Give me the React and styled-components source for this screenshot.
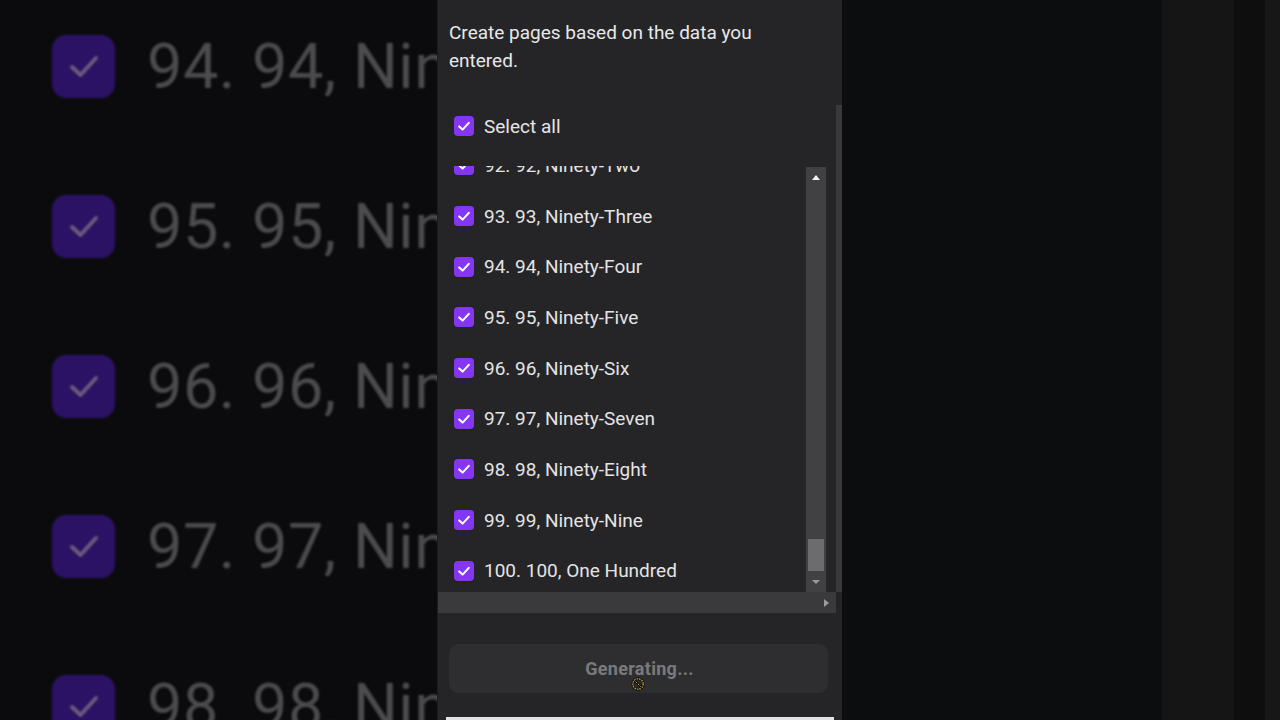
import React from "react";
import styled, { createGlobalStyle } from "styled-components";

const Global = createGlobalStyle`
  html, body { margin: 0; padding: 0; background: #0b0b0d; overflow: hidden; }
  * { box-sizing: border-box; }
`;

const Page = styled.div`
  display: grid;
  grid-template-columns: 438px 404px 438px;
  width: 1280px;
  height: 720px;
  font-family: Roboto, "Liberation Sans", sans-serif;
`;

/* ---------- blurred backdrop (left) ---------- */
const Backdrop = styled.div`
  background: #0b0b0d;
  overflow: hidden;
  padding-left: 52px;
  border-right: 1px solid #1c1c1e;
`;

const BackdropList = styled.div`
  margin-top: -14px;
  filter: blur(1.2px);
`;

const BackdropRow = styled.div`
  height: 160px;
  display: flex;
  align-items: center;
  gap: 32px;
  white-space: nowrap;
`;

const BigBox = styled.div`
  flex: none;
  width: 63px;
  height: 63px;
  border-radius: 14px;
  background: #2b1264;
  display: flex;
  align-items: center;
  justify-content: center;
`;

const BigText = styled.span`
  font-size: 63px;
  color: #4b4b4d;
  letter-spacing: 0.5px;
`;

/* ---------- right dark side ---------- */
const RightSide = styled.div`
  display: flex;
`;

const Strip = styled.div`
  width: ${(p) => p.$w}px;
  flex: ${(p) => (p.$w ? "none" : "1")};
  background: ${(p) => p.$c};
`;

/* ---------- panel ---------- */
const Panel = styled.div`
  position: relative;
  display: flex;
  flex-direction: column;
  background: #252528;
  overflow: hidden;
`;

const Description = styled.p`
  margin: 0;
  padding: 19px 11px 0;
  font-size: 19px;
  line-height: 28px;
  color: #e8e8e8;
`;

const ScrollArea = styled.div`
  margin-top: 30px;
  display: flex;
`;

const ScrollMain = styled.div`
  width: 398px;
  display: flex;
  flex-direction: column;
`;

const OuterBar = styled.div`
  width: 6px;
  height: 487px;
  background: #39393b;
`;

const SelectRow = styled.label`
  height: 42px;
  margin-bottom: 19px;
  padding-left: 16px;
  display: flex;
  align-items: center;
  gap: 10px;
  font-size: 19px;
  color: #e6e6e6;
`;

const ListFrame = styled.div`
  height: 426px;
  display: flex;
  padding-right: 10px;
`;

const Viewport = styled.div`
  flex: 1;
  overflow: hidden;
`;

const ListInner = styled.div`
  margin-top: -26px;
`;

const Item = styled.div`
  height: 50.7px;
  padding-left: 16px;
  display: flex;
  align-items: center;
  gap: 10px;
  font-size: 19px;
  color: #e4e4e4;
  white-space: nowrap;
`;

const Box = styled.span`
  flex: none;
  width: 20px;
  height: 20px;
  border-radius: 4px;
  background: #8436f2;
  display: flex;
  align-items: center;
  justify-content: center;
`;

const VScroll = styled.div`
  width: 20px;
  margin-top: 1px;
  background: #414143;
  display: flex;
  flex-direction: column;
`;

const ArrowCell = styled.div`
  height: ${(p) => p.$h}px;
  display: flex;
  align-items: center;
  justify-content: ${(p) => p.$justify || "center"};
  padding-right: ${(p) => p.$pr || 0}px;
`;

const Track = styled.div`
  flex: 1;
  display: flex;
  flex-direction: column;
  justify-content: flex-end;
  padding: 0 2px 1px;
`;

const Thumb = styled.div`
  height: 32px;
  background: #6c6c6e;
`;

const HScroll = styled.div`
  height: 21px;
  background: #3a3a3c;
  display: flex;
  justify-content: flex-end;
`;

const ButtonWrap = styled.div`
  padding: 31px 14px 0 11px;
`;

const GenButton = styled.button`
  width: 379px;
  height: 49px;
  border: none;
  border-radius: 9px;
  background: #2e2e31;
  color: #7a7a7d;
  font-family: Roboto, "Liberation Sans", sans-serif;
  font-size: 18px;
  font-weight: 700;
  letter-spacing: 0.3px;
  padding: 0 0 0 2px;
`;

const BottomLine = styled.div`
  margin: auto 8px 0;
  height: 3px;
  background: #e2e2e2;
`;

const Cursor = styled.div`
  position: absolute;
  left: 193px;
  top: 676px;
  width: 14px;
  height: 14px;
`;

const Check = ({ size = 20, color = "#fff", sw = 2 }) => (
  <svg width={size} height={size} viewBox="0 0 20 20" fill="none">
    <path d="M5.2 10.4 L8.6 13.6 L14.8 6.8" stroke={color} strokeWidth={sw} strokeLinecap="round" strokeLinejoin="round" />
  </svg>
);

const Tri = ({ dir, color }) => {
  const pts = {
    up: "0,5 4,0 8,5",
    down: "0,0 8,0 4,4",
    right: "0,0 5,4 0,8",
  }[dir];
  const w = dir === "right" ? 5 : 8;
  const h = dir === "right" ? 8 : 5;
  return (
    <svg width={w} height={h} viewBox={`0 0 ${w} ${h}`}>
      <polygon points={pts} fill={color} />
    </svg>
  );
};

const names = {
  92: "Ninety-Two",
  93: "Ninety-Three",
  94: "Ninety-Four",
  95: "Ninety-Five",
  96: "Ninety-Six",
  97: "Ninety-Seven",
  98: "Ninety-Eight",
  99: "Ninety-Nine",
  100: "One Hundred",
};

const items = [92, 93, 94, 95, 96, 97, 98, 99, 100];
const bgItems = [94, 95, 96, 97, 98];

export default function App() {
  return (
    <>
      <Global />
      <Page>
        <Backdrop>
          <BackdropList>
            {bgItems.map((n) => (
              <BackdropRow key={n}>
                <BigBox>
                  <Check size={50} color="#6b5d7c" sw={1.6} />
                </BigBox>
                <BigText>{`${n}. ${n}, ${names[n]}`}</BigText>
              </BackdropRow>
            ))}
          </BackdropList>
        </Backdrop>

        <Panel>
          <Description>
            Create pages based on the data you
            <br />
            entered.
          </Description>

          <ScrollArea>
            <ScrollMain>
              <SelectRow>
                <Box>
                  <Check />
                </Box>
                Select all
              </SelectRow>

              <ListFrame>
                <Viewport>
                  <ListInner>
                    {items.map((n) => (
                      <Item key={n}>
                        <Box>
                          <Check />
                        </Box>
                        {`${n}. ${n}, ${names[n]}`}
                      </Item>
                    ))}
                  </ListInner>
                </Viewport>
                <VScroll>
                  <ArrowCell $h={20}>
                    <Tri dir="up" color="#f2f2f2" />
                  </ArrowCell>
                  <Track>
                    <Thumb />
                  </Track>
                  <ArrowCell $h={20}>
                    <Tri dir="down" color="#9a9a9c" />
                  </ArrowCell>
                </VScroll>
              </ListFrame>

              <HScroll>
                <ArrowCell $h={21} $pr={7}>
                  <Tri dir="right" color="#9a9a9c" />
                </ArrowCell>
              </HScroll>
            </ScrollMain>
            <OuterBar />
          </ScrollArea>

          <ButtonWrap>
            <GenButton disabled>Generating...</GenButton>
          </ButtonWrap>

          <BottomLine />

          <Cursor>
            <svg width="14" height="14" viewBox="0 0 14 14" fill="none">
              <circle cx="7" cy="7" r="5.2" stroke="#111" strokeWidth="3" />
              <circle cx="7" cy="7" r="5.2" stroke="#c9a94a" strokeWidth="1.3" strokeDasharray="1.5 1" />
              <path d="M3.4 3.4 L10.6 10.6" stroke="#111" strokeWidth="2.6" />
              <path d="M3.4 3.4 L10.6 10.6" stroke="#c9a94a" strokeWidth="1" strokeDasharray="1.5 1" />
            </svg>
          </Cursor>
        </Panel>

        <RightSide>
          <Strip $w={320} $c="#0c0d0f" />
          <Strip $w={72} $c="#151516" />
          <Strip $w={31} $c="#0e0e0f" />
          <Strip $c="#171717" />
        </RightSide>
      </Page>
    </>
  );
}
